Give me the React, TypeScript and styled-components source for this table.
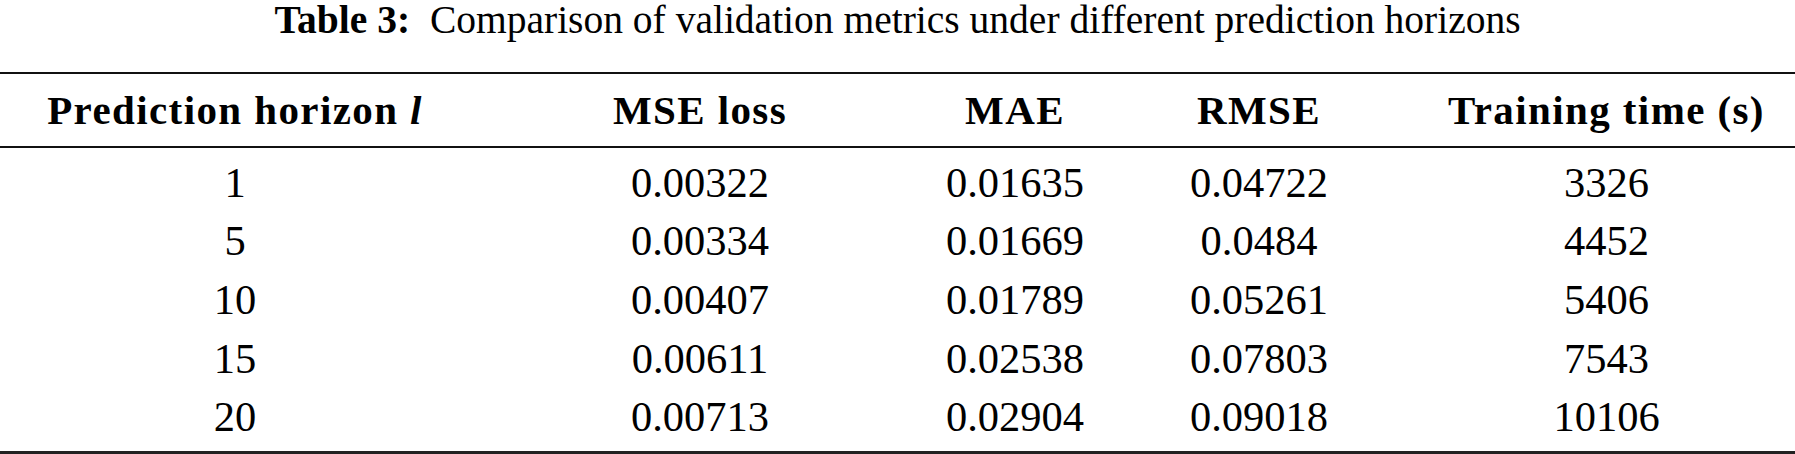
import React from "react";
import styled, { createGlobalStyle } from "styled-components";

const Global = createGlobalStyle`
  html, body {
    margin: 0;
    padding: 0;
    background: #ffffff;
  }
  body {
    font-family: "Liberation Serif", "DejaVu Serif", serif;
    color: #000;
  }
`;

const Page = styled.div`
  width: 1795px;
  display: flex;
  flex-direction: column;
  font-family: "Liberation Serif", "DejaVu Serif", serif;
`;

const Caption = styled.div`
  height: 72px;
  display: flex;
  justify-content: center;
  align-items: flex-start;
  font-size: 39.5px;
  line-height: 40px;
  white-space: pre;
`;

const CaptionLabel = styled.span`
  font-weight: 700;
`;

const Table = styled.div`
  display: flex;
  flex-direction: column;
  border-top: 2px solid #111;
  border-bottom: 3px solid #222;
`;

const Row = styled.div<{ $head?: boolean }>`
  display: grid;
  grid-template-columns: 470px 460px 170px 318px 1fr;
  align-items: center;
  height: ${(p) => (p.$head ? "72px" : "58.6px")};
  font-size: ${(p) => (p.$head ? "41px" : "42.5px")};
  font-weight: ${(p) => (p.$head ? 700 : 400)};
  letter-spacing: ${(p) => (p.$head ? "1.4px" : "0")};
  border-bottom: ${(p) => (p.$head ? "2px solid #111" : "none")};
`;

const Body = styled.div`
  display: flex;
  flex-direction: column;
  padding: 5px 0 5px;
`;

const Cell = styled.div`
  text-align: center;
  white-space: nowrap;
`;

const Var = styled.i`
  font-style: italic;
`;

const rows = [
  ["1", "0.00322", "0.01635", "0.04722", "3326"],
  ["5", "0.00334", "0.01669", "0.0484", "4452"],
  ["10", "0.00407", "0.01789", "0.05261", "5406"],
  ["15", "0.00611", "0.02538", "0.07803", "7543"],
  ["20", "0.00713", "0.02904", "0.09018", "10106"],
];

export default function App() {
  return (
    <>
      <Global />
      <Page>
        <Caption>
          <CaptionLabel>Table 3:</CaptionLabel>
          {"  Comparison of validation metrics under different prediction horizons"}
        </Caption>
        <Table>
          <Row $head>
            <Cell>
              Prediction horizon <Var>l</Var>
            </Cell>
            <Cell>MSE loss</Cell>
            <Cell>MAE</Cell>
            <Cell>RMSE</Cell>
            <Cell>Training time (s)</Cell>
          </Row>
          <Body>
            {rows.map((r) => (
              <Row key={r[0]}>
                {r.map((c, i) => (
                  <Cell key={i}>{c}</Cell>
                ))}
              </Row>
            ))}
          </Body>
        </Table>
      </Page>
    </>
  );
}
